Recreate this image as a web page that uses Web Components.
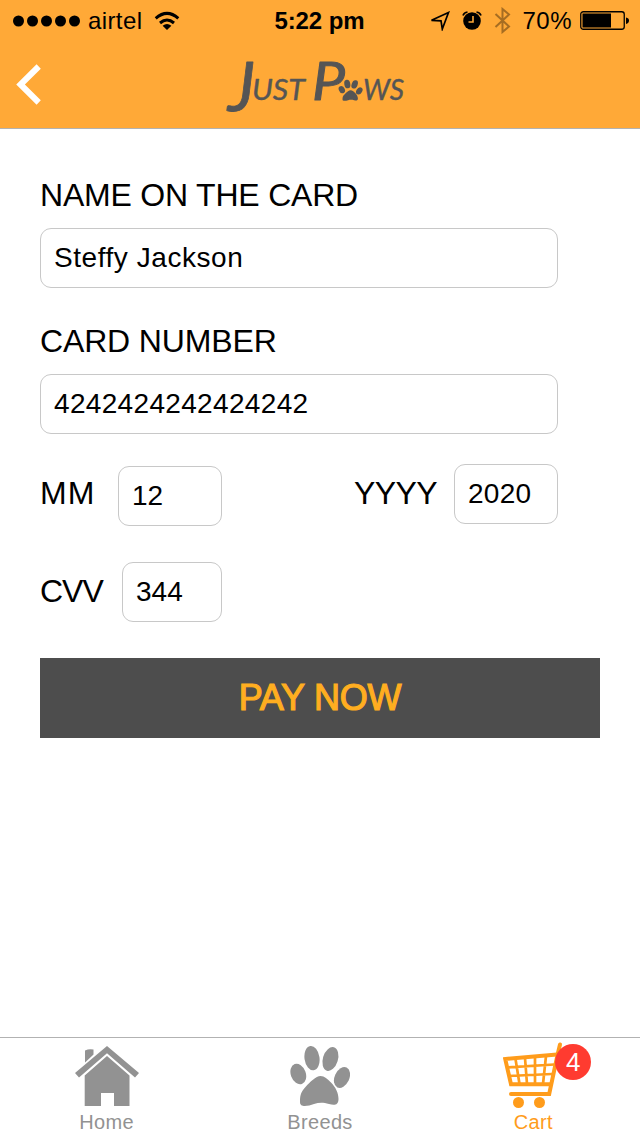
<!DOCTYPE html>
<html lang="en">
<head>
<meta charset="UTF-8">
<title>Just Paws</title>
<style>
  body {
    margin: 0;
    background: #fff;
    color: #000;
    font-family: "Liberation Sans", Arial, sans-serif;
  }
</style>
</head>
<body>
<paws-app>
  <status-bar slot="top" carrier="airtel" time="5:22 pm" battery="70%"></status-bar>
  <nav-header slot="top"></nav-header>

  <card-form>
    <form-field label="NAME ON THE CARD" style="--spacing: -0.2px; --value-spacing: 0.55px">Steffy Jackson</form-field>
    <form-field label="CARD NUMBER" style="--spacing: -0.15px; --value-spacing: 0.33px">4242424242424242</form-field>
    <form-field slot="month" label="MM" inline style="--width: 104px; --drop: 2px; --spacing: 1px">12</form-field>
    <form-field slot="year" label="YYYY" inline style="--width: 104px; --spacing: -0.6px; --value-spacing: 0.3px">2020</form-field>
    <form-field slot="cvv" label="CVV" inline style="--width: 100px; --spacing: -1px">344</form-field>
    <pay-button slot="action">PAY NOW</pay-button>
  </card-form>

  <tab-bar slot="bottom">
    <tab-item icon="home">Home</tab-item>
    <tab-item icon="paw">Breeds</tab-item>
    <tab-item icon="cart" active badge="4">Cart</tab-item>
  </tab-bar>
</paws-app>

<script>
// Shared base: every component clones its template into an open shadow root
class BaseElement extends HTMLElement {
  constructor() {
    super();
    this.attachShadow({ mode: "open" });
  }

  connectedCallback() {
    const template = document.createElement("template");
    template.innerHTML = `<style>${this.getStyles()}</style>${this.getMarkup()}`;
    this.shadowRoot.appendChild(template.content.cloneNode(true));
  }
}

// Paw shape, used by the logo and by the Breeds tab
const PAW = `
  <ellipse cx="8.300" cy="29" rx="7.500" ry="10.600" transform="rotate(-20 8.3 29)"/>
  <ellipse cx="22" cy="13.100" rx="7.500" ry="12.200" transform="rotate(-8 22 13.1)"/>
  <ellipse cx="40.400" cy="14" rx="7.500" ry="12.200" transform="rotate(17 40.4 14)"/>
  <ellipse cx="52" cy="32.500" rx="7.300" ry="11" transform="rotate(25 52 32.5)"/>
  <path d="M30.500 31C34.500 31 37.500 34 41 37.500C45.500 42 48.500 48 48.500 54C48.500 60.500 44 60.500 39 59C33 57.300 29 57.500 24 59C18 61 10 63 10 57C9.800 50 11.500 46 15.500 42C20 37 26 31 30.500 31Z"/>`;

const ICONS = {
  home: `<svg width="64" height="62" viewBox="0 0 64 62" fill="currentColor">
    <path d="M10 5.500Q14 3.500 18.500 4.500V9.500L10 17.500z"/>
    <path d="M32 1L64 28L60 32.500L32 8.300L4 32.500L0 28Z"/>
    <path d="M32 11L54.500 30.500V61H39V48H26V61H9.700V30.500Z"/>
  </svg>`,
  paw: `<svg width="60" height="62" viewBox="0 0 60 62" fill="currentColor">${PAW}</svg>`,
  cart: `<svg width="60" height="68" viewBox="0 0 60 68" fill="none" stroke="currentColor">
    <path d="M57 2.500L54.500 13L46.200 52H8" stroke-width="4" stroke-linecap="round"/>
    <path d="M54 12.500L2.200 17L8 42.300H47" stroke-width="4"/>
    <path d="M3 25.500L51 22.500M5 34L49 32M12.500 17L16.500 42M22 16L24 42M32 15V42M43 14L40 42" stroke-width="2.700"/>
    <g fill="currentColor" stroke="none"><circle cx="15.500" cy="60.500" r="5.500"/><circle cx="36.500" cy="60.500" r="5.500"/></g>
  </svg>`
};

class PawsApp extends BaseElement {
  getStyles() {
    return `
      :host { display: flex; flex-direction: column; width: 640px; height: 1136px; }
      header { background: #ffa937; border-bottom: 1px solid #b2b2b2; height: 128px; flex: none; }
      main { flex: 1; }
    `;
  }

  getMarkup() {
    return `
      <header><slot name="top"></slot></header>
      <main><slot></slot></main>
      <slot name="bottom"></slot>
    `;
  }
}

class StatusBar extends BaseElement {
  getStyles() {
    return `
      :host { display: grid; grid-template-columns: 1fr auto 1fr; align-items: center;
              height: 40px; box-sizing: border-box; padding: 0 11px 0 13px; font-size: 24px; line-height: 40px; }
      div { display: flex; align-items: center; }
      .right { justify-content: flex-end; }
      .carrier { margin: 1px 12px 0 8px; letter-spacing: 0.4px; }
      .time { font-weight: bold; letter-spacing: -0.1px; padding-top: 1px; margin-left: -3px; }
      .level { margin: 1px 8px 0 11px; letter-spacing: 0.5px; }
      .alarm { margin: 0 12px 0 12px; }
      svg { flex: none; display: block; }
    `;
  }

  getMarkup() {
    const dots = [5.5, 19.5, 33.5, 47.5, 61.5].map(x => `<circle cx="${x}" cy="6" r="5.500"/>`).join("");
    return `
      <div>
        <svg width="67" height="12">${dots}</svg>
        <span class="carrier">${this.getAttribute("carrier")}</span>
        <svg width="26" height="20" viewBox="0 0 26 20" fill="none" stroke="#000" stroke-width="3">
          <path d="M1.700 7.400Q13 -2.600 24.300 7.400"/>
          <path d="M6 12Q13 6 20 12"/>
          <path d="M8.600 14.700Q13 11.300 17.400 14.700L13 19Z" fill="#000" stroke="none"/>
        </svg>
      </div>
      <div class="time">${this.getAttribute("time")}</div>
      <div class="right">
        <svg width="20" height="20" viewBox="0 0 20 20" fill="none" stroke="#000" stroke-width="1.700">
          <path d="M18.500 1.500L1.500 9.300L11 9.800L12.300 18Z"/>
        </svg>
        <svg class="alarm" width="20" height="20" viewBox="0 0 20 20">
          <circle cx="10" cy="10" r="8.800"/>
          <path d="M1 4.500Q2 1.500 5.500 1M19 4.500Q18 1.500 14.500 1" fill="none" stroke="#000" stroke-width="1.700"/>
          <path d="M11 5V11H6.500" fill="none" stroke="#ffa937" stroke-width="1.600"/>
        </svg>
        <svg width="17" height="27" viewBox="0 0 17 27" fill="none" stroke="#a66d22" stroke-width="2">
          <path d="M1.500 7L15 19.500L8.500 25V2L15 7.500L1.500 20"/>
        </svg>
        <span class="level">${this.getAttribute("battery")}</span>
        <svg width="49" height="20" viewBox="0 0 49 20">
          <rect x=".75" y=".75" width="43.500" height="17.500" rx="2.500" fill="none" stroke="#000" stroke-width="1.300"/>
          <rect x="2.500" y="2.500" width="28.500" height="14"/>
          <path d="M46 6.500Q49 7 49 9.500T46 13Z"/>
        </svg>
      </div>
    `;
  }
}

class NavHeader extends BaseElement {
  getStyles() {
    return `
      :host { display: flex; height: 88px; padding-left: 16px; }
      svg { flex: none; display: block; }
      .back { margin-top: 24px; }
      .logo { margin: 18px 0 0 183px; overflow: visible; }
      text { font-family: Lato, sans-serif; font-style: italic; }
    `;
  }

  getMarkup() {
    return `
      <svg class="back" width="26" height="42" viewBox="0 0 26 42" fill="none" stroke="#fff" stroke-width="6">
        <path d="M22.700 2.500L4.500 20.500L22.700 38.500"/>
      </svg>
      <svg class="logo" width="180" height="60" viewBox="0 0 180 60" fill="#555" stroke="#555" stroke-linejoin="round">
        <text x="3" y="53" font-size="67" textLength="27" lengthAdjust="spacingAndGlyphs" stroke-width=".8">J</text>
        <text x="27" y="42" font-size="28" textLength="53" lengthAdjust="spacingAndGlyphs" stroke-width=".4">UST</text>
        <text x="87" y="42" font-size="53" textLength="33" lengthAdjust="spacingAndGlyphs" stroke-width="1">P</text>
        <g transform="translate(113.500 21.500) scale(.4 .35)" stroke="none">${PAW}</g>
        <text x="138" y="42" font-size="28" textLength="41" lengthAdjust="spacingAndGlyphs" stroke-width=".4">WS</text>
      </svg>
    `;
  }
}

class CardForm extends BaseElement {
  getStyles() {
    return `
      :host { display: flex; flex-direction: column; padding: 46px 40px 0; }
      .stack { display: flex; flex-direction: column; gap: 33px; }
      .row { display: flex; justify-content: space-between; align-items: flex-start; width: 518px; margin-top: 30px; }
      .cvv { display: flex; width: 182px; margin: 36px 0; }
      .cvv ::slotted(*) { flex: 1; }
    `;
  }

  getMarkup() {
    return `
      <div class="stack"><slot></slot></div>
      <div class="row"><slot name="month"></slot><slot name="year"></slot></div>
      <div class="cvv"><slot name="cvv"></slot></div>
      <slot name="action"></slot>
    `;
  }
}

class FormField extends BaseElement {
  getStyles() {
    return `
      :host { display: flex; flex-direction: column; gap: 13px; width: 518px; }
      :host([inline]) { flex-direction: row; justify-content: space-between; align-items: flex-start; gap: 17px; width: auto; }
      :host([slot="month"]) { width: 182px; }
      label { font-size: 32px; line-height: 40px; letter-spacing: var(--spacing, 0); white-space: nowrap; }
      :host([inline]) label { line-height: 58px; }
      .box { box-sizing: border-box; flex: none; width: var(--width, 518px); height: 60px; margin-top: var(--drop, 0);
             padding-left: 13px; border: 1px solid #c8c8c8; border-radius: 11px;
             font-size: 28px; line-height: 58px; letter-spacing: var(--value-spacing, 0); background: #fff; }
    `;
  }

  getMarkup() {
    return `
      <label>${this.getAttribute("label")}</label>
      <div class="box"><slot></slot></div>
    `;
  }
}

class PayButton extends BaseElement {
  getStyles() {
    return `
      :host { display: block; height: 80px; background: #4d4d4d; color: #ffae20;
              font-size: 36px; line-height: 80px; letter-spacing: -0.2px; text-align: center; -webkit-text-stroke: 1.2px #ffae20; }
    `;
  }

  getMarkup() {
    return `<slot></slot>`;
  }
}

class TabBar extends BaseElement {
  getStyles() {
    return `
      :host { display: grid; grid-template-columns: repeat(3, 1fr); height: 98px; border-top: 1px solid #b2b2b2; }
    `;
  }

  getMarkup() {
    return `<slot></slot>`;
  }
}

class TabItem extends BaseElement {
  getStyles() {
    return `
      :host { display: flex; flex-direction: column; align-items: center; color: #929292; font-size: 20px; }
      :host([active]) { color: #ff9c1b; }
      .icon { position: relative; height: 71px; padding-top: 7px; box-sizing: border-box; }
      :host([active]) .icon { padding-top: 4px; }
      svg { display: block; }
      .label { line-height: 26px; letter-spacing: 0.35px; }
      /* counter bubble laid over the corner of the icon */
      .badge { position: absolute; top: 6px; right: -28px; width: 36px; height: 36px; border-radius: 50%;
               background: #ff3b30; color: #fff; font-size: 26px; line-height: 36px; text-align: center; }
    `;
  }

  getMarkup() {
    const badge = this.getAttribute("badge");
    return `
      <div class="icon">${ICONS[this.getAttribute("icon")]}${badge ? `<span class="badge">${badge}</span>` : ""}</div>
      <span class="label"><slot></slot></span>
    `;
  }
}

customElements.define("paws-app", PawsApp);
customElements.define("status-bar", StatusBar);
customElements.define("nav-header", NavHeader);
customElements.define("card-form", CardForm);
customElements.define("form-field", FormField);
customElements.define("pay-button", PayButton);
customElements.define("tab-bar", TabBar);
customElements.define("tab-item", TabItem);
</script>
</body>
</html>
